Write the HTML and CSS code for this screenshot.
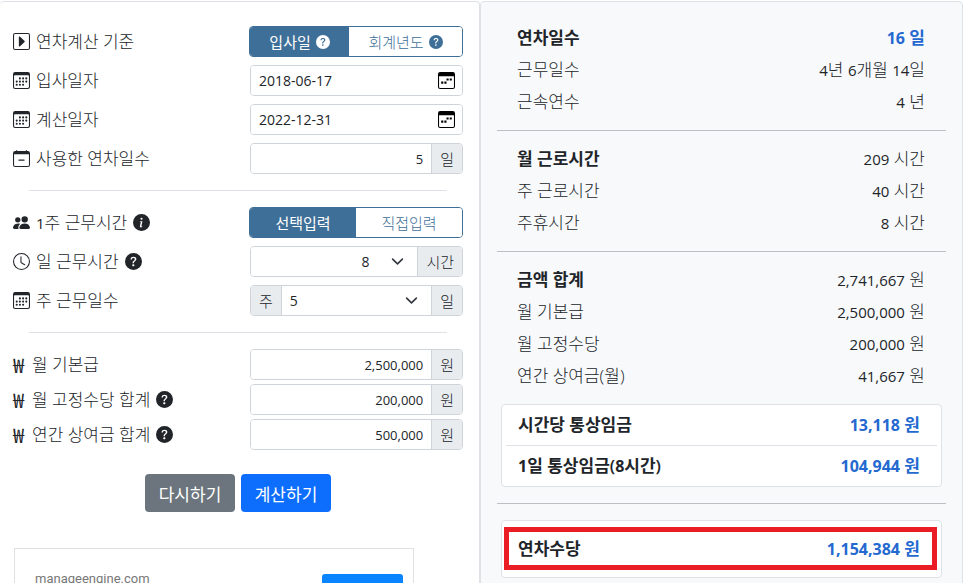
FILE: index.html
```
<!DOCTYPE html>
<html lang="ko">

	<head>
		<meta charset="UTF-8">
		<meta name="viewport" content="width=device-width, initial-scale=1">
		<title>연차수당 계산기</title>
		<link rel="stylesheet" href="styles.css">
	</head>

	<body>
		<svg class="sprite" aria-hidden="true">
			<symbol id="i-caret" viewBox="0 0 16 16">
				<path d="M14 1a1 1 0 0 1 1 1v12a1 1 0 0 1-1 1H2a1 1 0 0 1-1-1V2a1 1 0 0 1 1-1h12zM2 0a2 2 0 0 0-2 2v12a2 2 0 0 0 2 2h12a2 2 0 0 0 2-2V2a2 2 0 0 0-2-2H2z" />
				<path d="M5.500 12.200V3.800c0-.5.500-.7.900-.4l4.500 4.100c.3.300.3.700 0 1l-4.500 4.100c-.4.300-.9.100-.9-.4z" />
			</symbol>
			<symbol id="i-calendar" viewBox="0 0 16 16">
				<path d="M14 0H2a2 2 0 0 0-2 2v12a2 2 0 0 0 2 2h12a2 2 0 0 0 2-2V2a2 2 0 0 0-2-2zM1 3.857C1 3.384 1.448 3 2 3h12c.552 0 1 .384 1 .857v10.286c0 .473-.448.857-1 .857H2c-.552 0-1-.384-1-.857V3.857z" />
				<path d="M6.500 7a1 1 0 1 0 0-2 1 1 0 0 0 0 2zm3 0a1 1 0 1 0 0-2 1 1 0 0 0 0 2zm3 0a1 1 0 1 0 0-2 1 1 0 0 0 0 2zm-9 3a1 1 0 1 0 0-2 1 1 0 0 0 0 2zm3 0a1 1 0 1 0 0-2 1 1 0 0 0 0 2zm3 0a1 1 0 1 0 0-2 1 1 0 0 0 0 2zm3 0a1 1 0 1 0 0-2 1 1 0 0 0 0 2zm-9 3a1 1 0 1 0 0-2 1 1 0 0 0 0 2zm3 0a1 1 0 1 0 0-2 1 1 0 0 0 0 2zm3 0a1 1 0 1 0 0-2 1 1 0 0 0 0 2z" />
			</symbol>
			<symbol id="i-calendar-minus" viewBox="0 0 16 16">
				<path d="M5 9.500A.5.500 0 0 1 5.500 9h5a.5.500 0 0 1 0 1h-5a.5.500 0 0 1-.5-.5z" />
				<path d="M3.500 0a.5.500 0 0 1 .5.500V1h8V.5a.5.500 0 0 1 1 0V1h1a2 2 0 0 1 2 2v11a2 2 0 0 1-2 2H2a2 2 0 0 1-2-2V3a2 2 0 0 1 2-2h1V.5a.5.500 0 0 1 .5-.5zM1 4v10a1 1 0 0 0 1 1h12a1 1 0 0 0 1-1V4H1z" />
			</symbol>
			<symbol id="i-people" viewBox="0 0 16 16">
				<path d="M7 14s-1 0-1-1 1-4 5-4 5 3 5 4-1 1-1 1H7zm4-6a3 3 0 1 0 0-6 3 3 0 0 0 0 6zM5.216 14A2.238 2.238 0 0 1 5 13c0-1.355.68-2.750 1.936-3.720A6.325 6.325 0 0 0 5 9c-4 0-5 3-5 4s1 1 1 1h4.216zM4.500 8a2.500 2.500 0 1 0 0-5 2.500 2.500 0 0 0 0 5z" />
			</symbol>
			<symbol id="i-clock" viewBox="0 0 16 16">
				<path d="M8 3.500a.5.500 0 0 0-1 0V9a.5.500 0 0 0 .252.434l3.500 2a.5.500 0 0 0 .496-.868L8 8.710V3.500z" />
				<path d="M8 16A8 8 0 1 0 8 0a8 8 0 0 0 0 16zm7-8A7 7 0 1 1 1 8a7 7 0 0 1 14 0z" />
			</symbol>
			<symbol id="i-question" viewBox="0 0 16 16">
				<path d="M16 8A8 8 0 1 1 0 8a8 8 0 0 1 16 0zM5.496 6.033h.825c.138 0 .248-.113.266-.25.090-.656.540-1.134 1.342-1.134.686 0 1.314.343 1.314 1.168 0 .635-.374.927-.965 1.371-.673.489-1.206 1.060-1.168 1.987l.003.217a.25.250 0 0 0 .25.246h.811a.25.250 0 0 0 .25-.25v-.105c0-.718.273-.927 1.010-1.486.609-.463 1.244-.977 1.244-2.056 0-1.511-1.276-2.241-2.673-2.241-1.267 0-2.655.590-2.750 2.286a.237.237 0 0 0 .241.247zm2.325 6.443c.610 0 1.029-.394 1.029-.927 0-.552-.420-.940-1.029-.940-.584 0-1.009.388-1.009.940 0 .533.425.927 1.010.927z" />
			</symbol>
			<symbol id="i-info" viewBox="0 0 16 16">
				<path d="M8 16A8 8 0 1 0 8 0a8 8 0 0 0 0 16zm.93-9.412-1 4.705c-.070.340.029.533.304.533.194 0 .487-.070.686-.246l-.088.416c-.287.346-.920.598-1.465.598-.703 0-1.002-.422-.808-1.319l.738-3.468c.064-.293.006-.399-.287-.470l-.451-.081.082-.381 2.290-.287zM8 5.500a1 1 0 1 1 0-2 1 1 0 0 1 0 2z" />
			</symbol>
			<symbol id="i-picker" viewBox="0 0 16 16">
				<path d="M2 0h12a2 2 0 0 1 2 2v12a2 2 0 0 1-2 2H2a2 2 0 0 1-2-2V2a2 2 0 0 1 2-2zM1 4v10a1 1 0 0 0 1 1h12a1 1 0 0 0 1-1V4H1z" />
				<path d="M3 9h2v2H3zM6 9h2v2H6zM8 6h2v2H8zM11 6h2v2h-2z" />
			</symbol>
			<symbol id="i-chevron" viewBox="0 0 16 16">
				<path d="m2 5 6 6 6-6" fill="none" stroke="#343a40" stroke-width="2" stroke-linecap="round" stroke-linejoin="round" />
			</symbol>
		</svg>

		<div id="wrap">
			<form class="panel input_panel" onsubmit="return false">
				<div class="row">
					<span class="label"><svg class="icon"><use href="#i-caret"/></svg>연차계산 기준</span>
					<div class="toggle">
						<button type="button" class="on">입사일 <svg class="tip"><use href="#i-question"/></svg></button>
						<button type="button">회계년도 <svg class="tip"><use href="#i-question"/></svg></button>
					</div>
				</div>
				<div class="row">
					<label class="label" for="join_date"><svg class="icon"><use href="#i-calendar"/></svg>입사일자</label>
					<div class="group">
						<input type="text" id="join_date" class="date" value="2018-06-17">
						<svg class="picker"><use href="#i-picker"/></svg>
					</div>
				</div>
				<div class="row">
					<label class="label" for="calc_date"><svg class="icon"><use href="#i-calendar"/></svg>계산일자</label>
					<div class="group">
						<input type="text" id="calc_date" class="date" value="2022-12-31">
						<svg class="picker"><use href="#i-picker"/></svg>
					</div>
				</div>
				<div class="row">
					<label class="label" for="used_days"><svg class="icon"><use href="#i-calendar-minus"/></svg>사용한 연차일수</label>
					<div class="group">
						<input type="text" id="used_days" value="5">
						<span class="unit">일</span>
					</div>
				</div>

				<hr>

				<div class="row">
					<span class="label"><svg class="icon"><use href="#i-people"/></svg><span><span class="num">1</span>주 근무시간</span><svg class="icon"><use href="#i-info"/></svg></span>
					<div class="toggle">
						<button type="button" class="on">선택입력</button>
						<button type="button">직접입력</button>
					</div>
				</div>
				<div class="row">
					<label class="label" for="day_hours"><svg class="icon"><use href="#i-clock"/></svg>일 근무시간<svg class="icon"><use href="#i-question"/></svg></label>
					<div class="group">
						<div class="select">
							<select id="day_hours" class="right"><option>8</option></select>
							<svg class="chevron"><use href="#i-chevron"/></svg>
						</div>
						<span class="unit">시간</span>
					</div>
				</div>
				<div class="row">
					<label class="label" for="week_days"><svg class="icon"><use href="#i-calendar"/></svg>주 근무일수</label>
					<div class="group">
						<span class="unit">주</span>
						<div class="select">
							<select id="week_days"><option>5</option></select>
							<svg class="chevron"><use href="#i-chevron"/></svg>
						</div>
						<span class="unit">일</span>
					</div>
				</div>

				<hr>

				<div class="row tight">
					<label class="label" for="base_pay"><b class="won">₩</b>월 기본급</label>
					<div class="group">
						<input type="text" id="base_pay" value="2,500,000">
						<span class="unit">원</span>
					</div>
				</div>
				<div class="row tight">
					<label class="label" for="fixed_pay"><b class="won">₩</b>월 고정수당 합계<svg class="icon"><use href="#i-question"/></svg></label>
					<div class="group">
						<input type="text" id="fixed_pay" value="200,000">
						<span class="unit">원</span>
					</div>
				</div>
				<div class="row tight">
					<label class="label" for="bonus"><b class="won">₩</b>연간 상여금 합계<svg class="icon"><use href="#i-question"/></svg></label>
					<div class="group">
						<input type="text" id="bonus" value="500,000">
						<span class="unit">원</span>
					</div>
				</div>

				<div class="actions">
					<button type="reset" class="btn gray">다시하기</button>
					<button type="submit" class="btn blue">계산하기</button>
				</div>

				<div class="ad">
					<a href="#">manageengine.com</a>
					<button type="button" aria-label="열기"></button>
				</div>
			</form>

			<div class="panel result_panel">
				<dl>
					<div class="line strong"><dt>연차일수</dt><dd class="point"><span class="num">16</span> 일</dd></div>
					<div class="line"><dt>근무일수</dt><dd><span class="num">4</span>년 <span class="num">6</span>개월 <span class="num">14</span>일</dd></div>
					<div class="line"><dt>근속연수</dt><dd><span class="num">4</span> 년</dd></div>
				</dl>
				<hr>
				<dl>
					<div class="line strong"><dt>월 근로시간</dt><dd><span class="num">209</span> 시간</dd></div>
					<div class="line"><dt>주 근로시간</dt><dd><span class="num">40</span> 시간</dd></div>
					<div class="line"><dt>주휴시간</dt><dd><span class="num">8</span> 시간</dd></div>
				</dl>
				<hr>
				<dl>
					<div class="line strong"><dt>금액 합계</dt><dd><span class="num">2,741,667</span> 원</dd></div>
					<div class="line"><dt>월 기본급</dt><dd><span class="num">2,500,000</span> 원</dd></div>
					<div class="line"><dt>월 고정수당</dt><dd><span class="num">200,000</span> 원</dd></div>
					<div class="line"><dt>연간 상여금(월)</dt><dd><span class="num">41,667</span> 원</dd></div>
				</dl>
				<dl class="box wage">
					<div class="line strong"><dt>시간당 통상임금</dt><dd class="point"><span class="num">13,118</span> 원</dd></div>
					<div class="line strong"><dt><span class="num">1</span>일 통상임금(<span class="num">8</span>시간)</dt><dd class="point"><span class="num">104,944</span> 원</dd></div>
				</dl>
				<hr class="wide">
				<dl class="box total">
					<div class="line strong"><dt>연차수당</dt><dd class="point"><span class="num">1,154,384</span> 원</dd></div>
				</dl>
			</div>
		</div>
	</body>

</html>
```
FILE: styles.css
```
* {
	box-sizing: border-box;
}

body,
dl,
dd {
	margin: 0;
}

body {
	height: 100vh;
	overflow: hidden;
	padding: 1px 2px 0 0;
	background-color: #fff;
	color: #212529;
	font-family: "Open Sans", "Noto Sans CJK KR", sans-serif;
	font-size: 17px;
	font-weight: 300;
	line-height: 24px;
}

button,
input,
select {
	font-family: inherit;
	font-weight: inherit;
	color: inherit;
	margin: 0;
}

svg {
	fill: currentColor;
	flex: none;
}

hr {
	border: 0;
	border-top: 1px solid #dee2e6;
	margin: 16px;
}

.sprite {
	display: none;
}

.num {
	font-size: 15px;
	font-weight: 400;
}

#wrap {
	display: grid;
	grid-template-columns: 480fr 483fr;
}

.panel {
	border: 1px solid #dee2e6;
	border-radius: 4px;
}

/* 입력 */
.input_panel {
	border-left: 0;
	padding: 24px 16px 0 13px;
}

.row {
	display: grid;
	grid-template-columns: 1fr 213px;
	align-items: center;
	height: 31px;
	margin-bottom: 8px;
}

.row.tight {
	margin-bottom: 4px;
}

.input_panel hr {
	margin-top: 16px;
}

.row:has(+ hr) {
	margin-bottom: 0;
}

.label {
	display: flex;
	align-items: center;
	gap: 6px;
	white-space: nowrap;
}

.icon {
	width: 17px;
	height: 17px;
}

.won {
	width: 13px;
	font-family: "Noto Sans CJK KR", sans-serif;
	font-size: 20px;
}

.toggle {
	display: flex;
	height: 31px;
	margin-left: -1px;
	border: 1px solid #3e6f98;
	border-radius: 4px;
	overflow: hidden;
}

.toggle button {
	display: flex;
	flex: 1 1 auto;
	align-items: center;
	justify-content: center;
	gap: 5px;
	padding: 0;
	border: 0;
	background-color: #fff;
	color: #3e6f98;
	font-size: 15px;
}

.toggle .on {
	background-color: #3e6f98;
	color: #fff;
	font-weight: 400;
}

.tip {
	width: 14px;
	height: 14px;
}

.group {
	display: flex;
	position: relative;
	height: 31px;
	border: 1px solid #ced4da;
	border-radius: 4px;
	overflow: hidden;
}

.group input {
	flex: 1;
	min-width: 0;
	border: 0;
	padding: 0 8px;
	background-color: #fff;
	font-size: 13px;
	font-weight: 400;
	text-align: right;
}

.group .date {
	font-size: 14px;
	text-align: left;
}

.picker {
	position: absolute;
	right: 7px;
	top: 6px;
	width: 17px;
	height: 17px;
	color: #000;
}

.select {
	flex: 1;
	position: relative;
}

.select select {
	appearance: none;
	width: 100%;
	height: 100%;
	border: 0;
	padding: 0 48px 0 8px;
	background-color: #fff;
	font-size: 14px;
	font-weight: 400;
}

.select .right {
	text-align-last: right;
}

.chevron {
	position: absolute;
	right: 13px;
	top: 8px;
	width: 13px;
	height: 13px;
	pointer-events: none;
}

.unit {
	display: flex;
	align-items: center;
	padding: 0 8px;
	background-color: #e9ecef;
	border-left: 1px solid #ced4da;
	font-size: 15px;
}

.unit:first-child {
	border-left: 0;
	border-right: 1px solid #ced4da;
}

.actions {
	display: flex;
	justify-content: center;
	gap: 6px;
	margin-top: 24px;
}

.btn {
	width: 90px;
	height: 38px;
	padding: 0;
	border: 0;
	border-radius: 4px;
	color: #fff;
	font-size: 17px;
	font-weight: 400;
}

.gray {
	background-color: #6c757d;
}

.blue {
	background-color: #0d6efd;
}

.ad {
	display: flex;
	justify-content: space-between;
	align-items: flex-start;
	max-width: 400px;
	height: 120px;
	margin: 36px 0 0 1px;
	padding: 18px 10px 0 20px;
	border: 1px solid #e0e0e0;
}

.ad a {
	color: #777;
	font-family: Roboto, sans-serif;
	font-size: 13px;
	font-weight: 400;
	text-decoration: none;
}

.ad button {
	width: 81px;
	height: 36px;
	margin-top: 7px;
	border: 0;
	border-radius: 3px;
	background-color: #0a84ff;
}

/* 결과 */
.result_panel {
	padding: 20px 16px 0;
	background-color: #f8f9fb;
}

.result_panel hr {
	border-color: #bcc0c4;
	margin: 12px 0;
}

.result_panel .wide {
	margin: 16px 0;
}

.line {
	display: flex;
	justify-content: space-between;
	align-items: center;
	height: 32px;
	padding: 0 21px 0 20px;
}

.strong dt,
.point {
	font-weight: 600;
}

.strong dt .num,
.point .num {
	font-size: 16px;
	font-weight: 700;
}

.point {
	color: #2469d0;
}

.box {
	margin: 12px 4px 0;
	border: 1px solid #dee2e6;
	border-radius: 4px;
	background-color: #fff;
}

.wage {
	padding: 0 4px;
}

.wage .line {
	height: 40px;
	padding: 0 17px 0 12px;
}

.wage .line + .line {
	height: 41px;
	border-top: 1px solid #dee2e6;
}

.total {
	margin-top: 0;
	padding: 6px 4px 7px 2px;
}

.total .line {
	height: 43px;
	padding: 0 12px 0 9px;
	border: 5px solid #ea1c24;
}
```
